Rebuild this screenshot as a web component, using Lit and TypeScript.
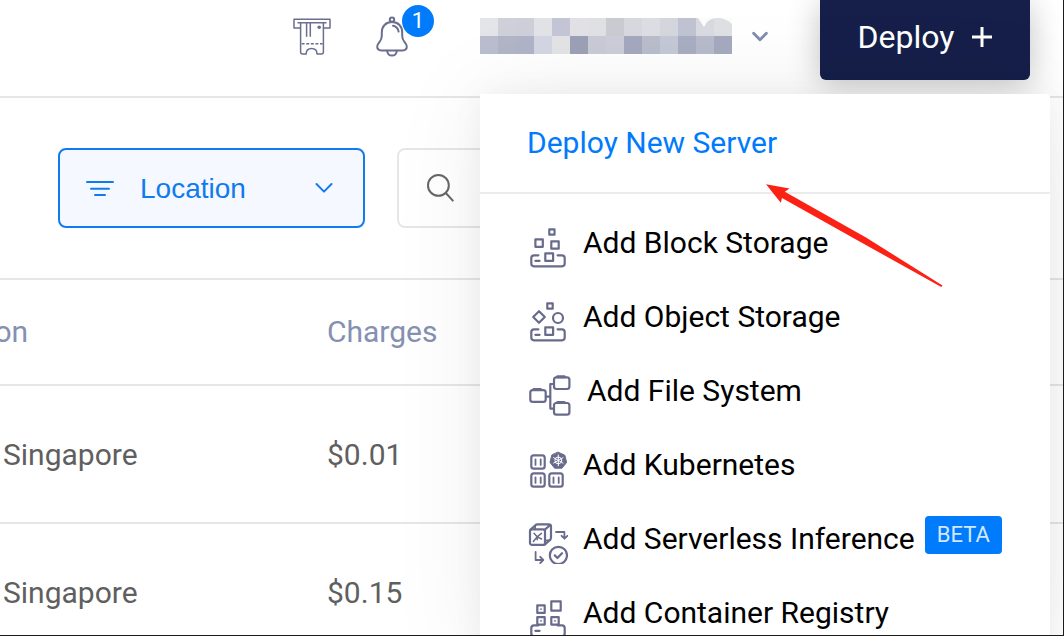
import { LitElement, html, svg, css } from "lit";
import { customElement } from "lit/decorators.js";

const tray = svg`
  <path d="M10.4 37.3H6q-2.7 0-2.7 2.7v5.600q0 2.700 2.700 2.700h28q2.700 0 2.700-2.700V40q0-2.700-2.700-2.700h-4.400M7.400 42.800h4.200"/>
`;

const folder = (x: number, y: number) => svg`
  <rect x=${x} y=${y + 1} width="15.4" height="11.6" rx="2.4"/>
  <path d="M${x + 3.4} ${y + 0.4}h7" stroke-width="3"/>
`;

const container = (x: number, y: number) => svg`
  <rect x=${x} y=${y} width="13.4" height="13.4" rx="2.4"/>
  <path d="M${x + 4.2} ${y + 4}v5.6M${x + 9.4} ${y + 4}v5.6" stroke-width="1.8"/>
`;

const icons = {
  block: svg`
    <rect x="21.3" y="11.3" width="5.2" height="5.4"/>
    <rect x="7.4" y="21.4" width="7.4" height="7.4"/>
    <rect x="23.3" y="23.3" width="7.4" height="7.4"/>
    <rect x="17.3" y="35.3" width="7.8" height="7.6"/>
    ${tray}`,
  object: svg`
    <rect x="19.3" y="11.3" width="5.4" height="5.4"/>
    <path d="M11 19.2l5.8 5.8-5.8 5.8L5.2 25z"/>
    <circle cx="30" cy="26" r="5"/>
    <rect x="17.3" y="35.3" width="7.8" height="7.6"/>
    ${tray}`,
  file: svg`
    ${folder(2.3, 23.2)}${folder(26, 10.4)}${folder(26, 36)}
    <path d="M18 30.6h4.3M26 18h-3.7v24.6H26"/>`,
  kubernetes: svg`
    ${container(3.3, 15.3)}${container(3.3, 33.3)}${container(21.3, 33.3)}
    <path d="M30.3 12.2l6.6 3.1 1.7 7.1-4.6 5.8h-7.4L22 22.4l1.7-7.1z" fill="currentColor" stroke-width="1"/>
    <g stroke="#fff" stroke-width="1"><circle cx="30.3" cy="20.4" r="3.4"/>
    <path d="M30.3 15v10.800M25.600 17.700l9.400 5.400M35 17.700l-9.400 5.400"/></g>`,
  serverless: svg`
    <rect x="2" y="15.3" width="15" height="15.6" rx="2"/>
    <path d="M2.6 15.6l4.8-4.4q.8-.8 2-.8h11.4q2.2 0 2.2 2.2v11.2q0 1-.8 1.8l-5.2 4.8M16.6 15.8l5.6-4.8"/>
    <path d="M7.2 11.2v4M17 26.2h5.4" stroke-width="1.6"/>
    <path d="M5.4 27.4l3.8-4.6 4.4 2.2M6 19.2l3.2 3.6 4.2-3.4M9.2 22.8v3" stroke-width="1.5"/>
    <path d="M28 18h8.4v6.2M33.6 21.8l2.9 2.9 2.9-2.9M7.6 38v8h7M12.2 42.8l3.1 3.2-3.1 3.2" stroke-width="1.8"/>
    <circle cx="30.4" cy="41.4" r="8.6"/>
    <path d="M26.8 41.4l2.6 2.6 4.6-4.8"/>`,
  registry: svg`
    <rect x="9.3" y="17.3" width="7.4" height="7.6"/>
    <rect x="23.3" y="13.3" width="9.4" height="9.4"/>
    <rect x="9.3" y="29.2" width="7.4" height="7.4"/>
    <rect x="23.3" y="29.2" width="7.4" height="7.4"/>
    <path d="M12.4 21.1h1.2M12.4 32.9h1.2M26.4 32.9h1.2" stroke-width="1.2"/>
    ${tray}`,
};

interface Entry {
  label: string;
  icon: keyof typeof icons;
  width?: number;
  tag?: string;
}

const entries: Entry[] = [
  { label: "Add Block Storage", icon: "block" },
  { label: "Add Object Storage", icon: "object" },
  { label: "Add File System", icon: "file", width: 44 },
  { label: "Add Kubernetes", icon: "kubernetes" },
  { label: "Add Serverless Inference", icon: "serverless", tag: "BETA" },
  { label: "Add Container Registry", icon: "registry" },
];

@customElement("deploy-menu")
export class DeployMenu extends LitElement {
  static styles = css`
    :host {
      display: block;
      background: #fff;
      border-radius: 0 4px 0 0;
      box-shadow: 0 0 100px rgba(0, 0, 0, 0.07), 0 0 32px rgba(0, 0, 0, 0.05);
      font-size: 30px;
    }
    a {
      color: #000;
      text-decoration: none;
    }
    .primary {
      display: block;
      padding: 0 47px;
      line-height: 98px;
      color: #007bfc;
      border-bottom: 2px solid #ebebeb;
    }
    .list {
      margin: 0;
      padding: 12px 0;
      list-style: none;
    }
    .item {
      display: flex;
      align-items: center;
      padding: 12px 48px;
      line-height: 50px;
      white-space: nowrap;
    }
    .icon {
      flex: none;
      margin-right: 15px;
      color: #686b8b;
    }
    .tag {
      align-self: flex-start;
      margin: 2px 0 0 10px;
      padding: 0 12px;
      border-radius: 4px;
      background: #007bfc;
      color: #d3e8ff;
      font-size: 22px;
      line-height: 38px;
    }
  `;

  render() {
    return html`
      <a class="primary" href="#server">Deploy New Server</a>
      <ul class="list">
        ${entries.map(
          (e) => html`<li>
            <a class="item" href="#${e.icon}">
              <svg class="icon" width=${e.width ?? 40} height="50" fill="none" stroke="currentColor"
                stroke-width="2.2" stroke-linejoin="round" stroke-linecap="round" aria-hidden="true">${icons[e.icon]}</svg>
              <span>${e.label}</span>
              ${e.tag ? html`<span class="tag">${e.tag}</span>` : ""}
            </a>
          </li>`
        )}
      </ul>
    `;
  }
}

const mosaic = [
  ["#e4e5e9", "#cfd1da", "#cdd0d8", "#e2e3e7", "#c4c5d6", "#e2e2e6", "#dfe1e5", "#cbccd2", "#d8d9de", "#dddee3", "#d4d7de", "#c0c3d2", "#d9d9e2", "#dfe0e4"],
  ["#babdcd", "#b1b5c6", "#b0b4c8", "#d4d7e3", "#e4e4e7", "#9ca1b7", "#c9cbd7", "#ccced9", "#a4a9bf", "#babecc", "#c5c9d6", "#a9aec2", "#b7bbcc", "#a5aac0"],
];

const rows = [
  ["Singapore", "$0.01"],
  ["Singapore", "$0.15"],
];

@customElement("app-root")
export class AppRoot extends LitElement {
  static styles = css`
    :host {
      display: block;
      position: relative;
      box-sizing: border-box;
      height: 100vh;
      overflow: hidden;
      background: #fff;
      border: solid #1b1b1b;
      border-width: 0 1px 1px 0;
      font-family: Roboto, "Liberation Sans", sans-serif;
      font-size: 30px;
    }
    button,
    select,
    input {
      margin: 0;
      padding: 0;
      border: 0;
      background: none;
      color: inherit;
      font: inherit;
      cursor: pointer;
    }
    svg {
      display: block;
      flex: none;
    }
    .header {
      display: flex;
      justify-content: flex-end;
      height: 96px;
      padding-right: 33px;
      border-bottom: 2px solid #e6e6e6;
    }
    .tools {
      display: flex;
      align-items: center;
      height: 74px;
      color: #6b6e8d;
    }
    .bell {
      position: relative;
      margin: 0 72px 0 45px;
    }
    .count {
      position: absolute;
      top: -11px;
      left: 26px;
      width: 32px;
      border-radius: 50%;
      background: #007bfc;
      color: #fff;
      font-size: 22px;
      line-height: 32px;
      text-align: center;
    }
    .account {
      display: flex;
      align-items: center;
      gap: 20px;
      margin-right: 52px;
    }
    .deploy-area {
      position: relative;
    }
    .deploy {
      display: flex;
      align-items: center;
      justify-content: center;
      gap: 18px;
      width: 210px;
      height: 80px;
      padding-bottom: 6px;
      border-radius: 0 0 6px 6px;
      background: #151f49;
      color: #fff;
      font-size: 32px;
      box-shadow: 0 4px 32px rgba(0, 0, 0, 0.24);
    }
    .menu {
      position: absolute;
      z-index: 1;
      top: 94px;
      right: -20px;
      width: 570px;
    }
    .filters {
      display: flex;
      gap: 32px;
      padding: 50px 58px;
    }
    .field {
      display: flex;
      align-items: center;
      box-sizing: border-box;
      height: 80px;
      padding: 0 28px;
      border: 2px solid #e6e6e6;
      border-radius: 8px;
      color: #666;
    }
    .location {
      width: 307px;
      padding: 0 30px 0 26px;
      border-color: #107bee;
      background: #f5f8ff;
      color: #107bee;
      font-family: "Liberation Sans", Arial, sans-serif;
      font-size: 28px;
    }
    .location select {
      flex: 1;
      min-width: 0;
      height: 76px;
      margin-left: 26px;
      appearance: none;
      outline: none;
    }
    .search {
      flex: 1;
    }
    .search input {
      flex: 1;
      min-width: 0;
      margin-left: 16px;
      outline: none;
    }
    .table {
      width: calc(100% + 88px);
      margin-left: -88px;
      border-collapse: separate;
      border-spacing: 0;
      border-top: 2px solid #e6e6e6;
      color: #5f5f5f;
      text-align: left;
    }
    .table th,
    .table td {
      padding: 0;
      border-bottom: 2px solid #e6e6e6;
    }
    .table th {
      height: 102px;
      padding-bottom: 2px;
      color: #8590b2;
      font-weight: 400;
    }
    .table td {
      height: 136px;
    }
    .table .place {
      width: 415px;
    }
    .table td.place {
      box-sizing: border-box;
      padding-left: 91px;
    }
    .arrow {
      position: absolute;
      z-index: 2;
      top: 184px;
      left: 766px;
      pointer-events: none;
    }
  `;

  render() {
    return html`
      <header class="header">
        <div class="tools">
          <button aria-label="Billing">
            <svg width="38" height="38" fill="none" stroke="currentColor" stroke-width="1.5" stroke-linejoin="round">
              <path d="M7.3 10H1V1.3h36V10h-6.3M4.5 4.7h29M7.6 4.7V34q0 2 2 2h3.6q0-5.4 5.4-5.4t5.4 5.4h4.4q2 0 2-2V4.7M13.6 4.7v14M17.3 4.7v14"/>
              <path d="M8.6 25.8h21" stroke-dasharray="3 1.6"/>
              <circle cx="26.2" cy="9.3" r="1.8" fill="currentColor" stroke="none"/>
            </svg>
          </button>
          <button class="bell" aria-label="Notifications">
            <svg width="32" height="42" fill="none" stroke="currentColor" stroke-width="2" stroke-linecap="round" stroke-linejoin="round">
              <circle cx="16" cy="3.6" r="2.2"/>
              <path d="M16 6C9.6 6 5.8 10.4 5.8 16.4v3.4c0 3-.8 4.4-2.2 6C1.8 27.8 1.200 28.600 1.200 30.600c0 2.400 1.600 3.800 4 3.800h21.600c2.400 0 4-1.400 4-3.800 0-2-.6-2.800-2.400-4.800-1.400-1.600-2.200-3-2.200-6v-3.400C26.200 10.400 22.400 6 16 6z"/>
              <path d="M11.200 34.800c.2 3 2 4.800 4.800 4.800s4.600-1.800 4.800-4.800"/>
              <path d="M17 9.800c3.200.6 5 2.400 5.600 5.800"/>
            </svg>
            <span class="count">1</span>
          </button>
          <button class="account" aria-label="Account">
            <svg width="252" height="38" shape-rendering="crispEdges">
              ${mosaic.map((line, y) => line.map((c, x) => svg`<rect x=${x * 18} y=${y * 18} width="18" height="18" fill=${c}/>`))}
              <path d="M218 0h18q-9 1-12 9-4-6-6-9zM240 0h12v6q-5-5-12-6z" fill="#fcfcfc" shape-rendering="auto"/>
            </svg>
            <svg width="16" height="12" fill="none" stroke="#7f8cb1" stroke-width="2.8" stroke-linecap="round" stroke-linejoin="round">
              <path d="M1.6 2.2L8 8.800l6.400-6.600"/>
            </svg>
          </button>
        </div>
        <div class="deploy-area">
          <button class="deploy" aria-expanded="true">
            <span>Deploy</span>
            <svg width="20" height="20" stroke="#fff" stroke-width="3" aria-hidden="true"><path d="M0 10h20M10 0v20"/></svg>
          </button>
          <deploy-menu class="menu"></deploy-menu>
        </div>
      </header>
      <main>
        <div class="filters">
          <label class="field location">
            <svg width="28" height="18" stroke="currentColor" stroke-width="2" stroke-linecap="round">
              <path d="M1 3h26M5 9.700h18M9 16h10"/>
            </svg>
            <select aria-label="Location"><option>Location</option></select>
            <svg width="18" height="12" fill="none" stroke="currentColor" stroke-width="2" stroke-linecap="round" stroke-linejoin="round">
              <path d="M1.5 2L9 9.600 16.500 2"/>
            </svg>
          </label>
          <label class="field search">
            <svg width="28" height="30" fill="none" stroke="currentColor" stroke-width="2" stroke-linecap="round">
              <circle cx="11.4" cy="12.4" r="10.4"/>
              <path d="M18.800 20l7 7.600"/>
            </svg>
            <input type="search" aria-label="Search" />
          </label>
        </div>
        <table class="table">
          <thead>
            <tr><th class="place">Location</th><th>Charges</th></tr>
          </thead>
          <tbody>
            ${rows.map(([place, charge]) => html`<tr><td class="place">${place}</td><td>${charge}</td></tr>`)}
          </tbody>
        </table>
      </main>
      <svg class="arrow" width="178" height="104" aria-hidden="true">
        <path d="M0 .3L23.500 4.500 18.800 7.800 100 53.500 176.500 101.500 175.300 103 90 55.500 16 14 14.800 18.800z" fill="#fb2114"/>
      </svg>
    `;
  }
}
